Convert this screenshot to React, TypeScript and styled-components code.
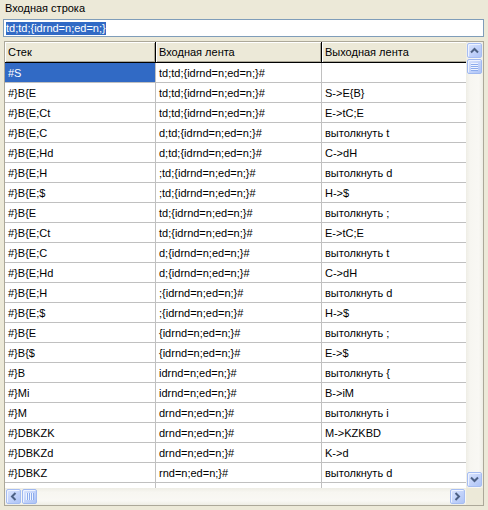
import styled, { createGlobalStyle } from "styled-components";

const GlobalStyle = createGlobalStyle`
  html, body {
    margin: 0;
    padding: 0;
    background: #ece9d8;
  }
  body {
    font-family: "Liberation Sans", Arial, sans-serif;
    font-size: 11px;
    color: #000;
  }
`;

const Window = styled.div`
  width: 488px;
  height: 510px;
  background: #ece9d8;
  overflow: hidden;
  display: flex;
  flex-direction: column;
`;

const Caption = styled.div`
  padding: 2px 0 0 5px;
  line-height: 13px;
  box-sizing: border-box;
  height: 19px;
`;

const InputBox = styled.div`
  margin-left: 3px;
  width: 481px;
  height: 18px;
  box-sizing: border-box;
  border: 1px solid #7f9db9;
  background: #fff;
  padding: 2px 0 0 2px;
  line-height: 13px;
  white-space: nowrap;
`;

const Selection = styled.span`
  display: inline-block;
  background: #316ac5;
  color: #fff;
  height: 13px;
`;

const GridFrame = styled.div`
  margin: 4px 0 0 4px;
  width: 480px;
  height: 465px;
  box-sizing: border-box;
  border: 1px solid #aca899;
  background: #fff;
  display: grid;
  grid-template-columns: 461px 17px;
  grid-template-rows: 446px 17px;
`;

const Viewport = styled.div`
  overflow: hidden;
  background: #fff;
`;

const Row = styled.div`
  display: flex;
  width: 640px;
`;

const HeaderCell = styled.div<{ $w: number }>`
  width: ${(p) => p.$w}px;
  flex: none;
  height: 21px;
  box-sizing: border-box;
  background: #ece9d8;
  border-right: 1px solid #000;
  border-bottom: 1px solid #000;
  box-shadow: inset 1px 1px 0 #fff, inset -1px -1px 0 #aca899;
  padding: 0 0 0 3px;
  line-height: 20px;
  white-space: nowrap;
`;

const Cell = styled.div<{ $w: number; $selected?: boolean }>`
  width: ${(p) => p.$w}px;
  flex: none;
  height: 20px;
  box-sizing: border-box;
  border-right: 1px solid #c0c0c0;
  border-bottom: 1px solid #c0c0c0;
  padding-left: 3px;
  line-height: 20px;
  white-space: nowrap;
  overflow: hidden;
  background: ${(p) => (p.$selected ? "#316ac5" : "#fff")};
  color: ${(p) => (p.$selected ? "#fff" : "#000")};
`;

const VTrack = styled.div`
  display: flex;
  flex-direction: column;
  align-items: center;
  justify-content: space-between;
  background: linear-gradient(90deg, #eeede5 0%, #f7f6f1 25%, #f9f8f4 75%, #eeede5 100%);
  padding: 1px 0;
`;

const HTrack = styled.div`
  display: flex;
  align-items: center;
  background: linear-gradient(180deg, #eeede5 0%, #f7f6f1 25%, #f9f8f4 75%, #eeede5 100%);
  padding: 0 1px;
`;

const TopGroup = styled.div`
  display: flex;
  flex-direction: column;
  gap: 1px;
`;

const LeftGroup = styled.div`
  display: flex;
  gap: 1px;
`;

const Spacer = styled.div`
  flex: 1;
`;

const Corner = styled.div`
  background: #ece9d8;
`;

const ScrollBtn = styled.div`
  width: 15px;
  height: 15px;
  box-sizing: border-box;
  border: 1px solid #a6bdf2;
  border-radius: 2px;
  background: linear-gradient(135deg, #dbe5fd 0%, #c3d3fa 50%, #aec4f6 100%);
  box-shadow: inset 1px 1px 0 #eef3ff;
  display: flex;
  align-items: center;
  justify-content: center;
`;

const Thumb = styled(ScrollBtn)`
  border-color: #9fb8f0;
`;

type Dir = "up" | "down" | "left" | "right";

const arrowPaths: Record<Dir, string> = {
  up: "M3 8.5 L6.5 5 L10 8.5",
  down: "M3 4.5 L6.5 8 L10 4.5",
  left: "M8.5 3 L5 6.5 L8.5 10",
  right: "M4.5 3 L8 6.5 L4.5 10",
};

const Arrow = ({ dir }: { dir: Dir }) => (
  <ScrollBtn>
    <svg width="13" height="13" viewBox="0 0 13 13">
      <path d={arrowPaths[dir]} fill="none" stroke="#4d6185" strokeWidth="2" />
    </svg>
  </ScrollBtn>
);

const Grip = ({ vertical }: { vertical: boolean }) => (
  <Thumb>
    <svg width="13" height="13" viewBox="0 0 13 13">
      {[3, 5, 7, 9].map((v) =>
        vertical ? (
          <g key={v}>
            <line x1="3" x2="10" y1={v + 0.5} y2={v + 0.5} stroke="#eef4ff" />
            <line x1="3" x2="10" y1={v + 1.5} y2={v + 1.5} stroke="#8cabec" />
          </g>
        ) : (
          <g key={v}>
            <line y1="3" y2="10" x1={v + 0.5} x2={v + 0.5} stroke="#eef4ff" />
            <line y1="3" y2="10" x1={v + 1.5} x2={v + 1.5} stroke="#8cabec" />
          </g>
        )
      )}
    </svg>
  </Thumb>
);

const cols = [151, 166, 160];

const rows: [string, string, string][] = [
  ["#S", "td;td;{idrnd=n;ed=n;}#", ""],
  ["#}B{E", "td;td;{idrnd=n;ed=n;}#", "S->E{B}"],
  ["#}B{E;Ct", "td;td;{idrnd=n;ed=n;}#", "E->tC;E"],
  ["#}B{E;C", "d;td;{idrnd=n;ed=n;}#", "вытолкнуть t"],
  ["#}B{E;Hd", "d;td;{idrnd=n;ed=n;}#", "C->dH"],
  ["#}B{E;H", ";td;{idrnd=n;ed=n;}#", "вытолкнуть d"],
  ["#}B{E;$", ";td;{idrnd=n;ed=n;}#", "H->$"],
  ["#}B{E", "td;{idrnd=n;ed=n;}#", "вытолкнуть ;"],
  ["#}B{E;Ct", "td;{idrnd=n;ed=n;}#", "E->tC;E"],
  ["#}B{E;C", "d;{idrnd=n;ed=n;}#", "вытолкнуть t"],
  ["#}B{E;Hd", "d;{idrnd=n;ed=n;}#", "C->dH"],
  ["#}B{E;H", ";{idrnd=n;ed=n;}#", "вытолкнуть d"],
  ["#}B{E;$", ";{idrnd=n;ed=n;}#", "H->$"],
  ["#}B{E", "{idrnd=n;ed=n;}#", "вытолкнуть ;"],
  ["#}B{$", "{idrnd=n;ed=n;}#", "E->$"],
  ["#}B", "idrnd=n;ed=n;}#", "вытолкнуть {"],
  ["#}Mi", "idrnd=n;ed=n;}#", "B->iM"],
  ["#}M", "drnd=n;ed=n;}#", "вытолкнуть i"],
  ["#}DBKZK", "drnd=n;ed=n;}#", "M->KZKBD"],
  ["#}DBKZd", "drnd=n;ed=n;}#", "K->d"],
  ["#}DBKZ", "rnd=n;ed=n;}#", "вытолкнуть d"],
  ["#}DBK", "rnd=n;ed=n;}#", "Z->r"],
];

const App = () => {
  return (
    <Window>
      <GlobalStyle />
      <Caption>Входная строка</Caption>
      <InputBox>
        <Selection>td;td;{"{"}idrnd=n;ed=n;{"}"}</Selection>
      </InputBox>
      <GridFrame>
        <Viewport>
          <Row>
            <HeaderCell $w={cols[0]}>Стек</HeaderCell>
            <HeaderCell $w={cols[1]}>Входная лента</HeaderCell>
            <HeaderCell $w={cols[2]}>Выходная лента</HeaderCell>
          </Row>
          {rows.map((r, i) => (
            <Row key={i}>
              <Cell $w={cols[0]} $selected={i === 0}>{r[0]}</Cell>
              <Cell $w={cols[1]}>{r[1]}</Cell>
              <Cell $w={cols[2]}>{r[2]}</Cell>
            </Row>
          ))}
        </Viewport>
        <VTrack>
          <TopGroup>
            <Arrow dir="up" />
            <Grip vertical />
          </TopGroup>
          <Arrow dir="down" />
        </VTrack>
        <HTrack>
          <LeftGroup>
            <Arrow dir="left" />
            <Grip vertical={false} />
          </LeftGroup>
          <Spacer />
          <Arrow dir="right" />
        </HTrack>
        <Corner />
      </GridFrame>
    </Window>
  );
};

export default App;
